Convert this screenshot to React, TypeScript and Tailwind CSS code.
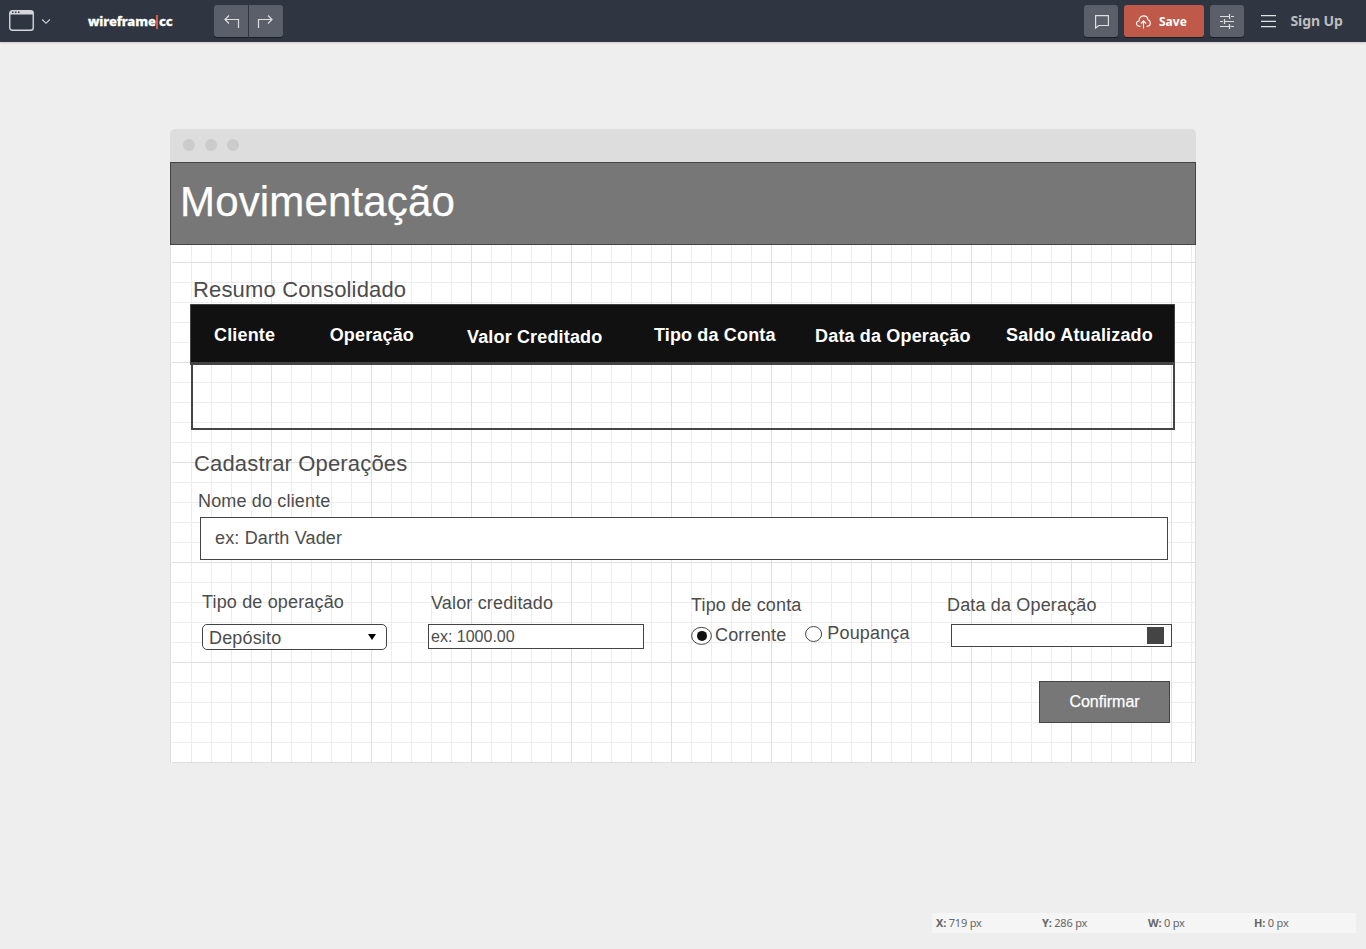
import React from "react";

const gridLines =
  "bg-[linear-gradient(to_right,#e0e0e0_1px,transparent_1px),linear-gradient(to_bottom,#e0e0e0_1px,transparent_1px),linear-gradient(to_right,#ededed_1px,transparent_1px),linear-gradient(to_bottom,#ededed_1px,transparent_1px)] bg-[size:100px_100px,100px_100px,20px_20px,20px_20px] bg-[position:0_17px,0_17px,0_17px,0_17px]";

const toolButton =
  "flex h-8 items-center justify-center bg-[#5b5f69] shadow-[0_1px_0_#1b1d24]";

const columns = [
  { label: "Cliente", place: "ml-[23px] mt-5" },
  { label: "Operação", place: "ml-[54.5px] mt-5" },
  { label: "Valor Creditado", place: "ml-[53px] mt-[22px]" },
  { label: "Tipo da Conta", place: "ml-[51.5px] mt-5" },
  { label: "Data da Operação", place: "ml-[39.4px] mt-[21px]" },
  { label: "Saldo Atualizado", place: "ml-[35.3px] mt-5" },
];

const readings = [
  { axis: "X:", value: "719 px" },
  { axis: "Y:", value: "286 px" },
  { axis: "W:", value: "0 px" },
  { axis: "H:", value: "0 px" },
];

function TopBar() {
  return (
    <header className="flex h-[42px] shrink-0 items-start bg-[#2f3541] font-['Noto_Sans',sans-serif] shadow-[0_1px_2px_rgba(0,0,0,0.15)]">
      <svg className="ml-[9px] mt-[10px]" width="25" height="21" viewBox="0 0 25 21" fill="none">
        <rect x="0.75" y="0.75" width="23.5" height="19.5" rx="2.5" stroke="#d5d6d9" strokeWidth="1.4" />
        <path d="M1 1h23v3.500H1z" fill="#d5d6d9" />
        <path d="M3 2.200h1.500M6 2.200h1.500M9 2.200h1.500" stroke="#2f3541" strokeWidth="1.4" />
      </svg>
      <svg className="ml-[7px] mt-[18px]" width="10" height="7" viewBox="0 0 10 7" fill="none">
        <path d="M1.200 1.500 5 5.300 8.800 1.500" stroke="#d5d6d9" strokeWidth="1.1" />
      </svg>
      <div className="ml-[37px] mt-3 flex w-[87px] text-[13px] leading-[18px] font-extrabold text-white tracking-[-0.1px] [-webkit-text-stroke:0.3px_white]">
        <span className="w-[68px]">wireframe</span>
        <span className="mt-[3px] h-[14px] w-[2px] bg-[#dc5743]" />
        <span className="ml-px">cc</span>
      </div>
      <div className="ml-[39px] mt-[5px] flex gap-px">
        <button className={`${toolButton} w-[34px] rounded-l-[3px]`}>
          <svg className="ml-[2px] mt-px" width="16" height="14" viewBox="0 0 16 14" fill="none" stroke="#dddee0" strokeWidth="1.2">
            <path d="M5 0.500 1 4.500 5 8.500M1 4.500H14.500V13" />
          </svg>
        </button>
        <button className={`${toolButton} w-[34px] rounded-r-[3px]`}>
          <svg className="mr-[2px] mt-px" width="16" height="14" viewBox="0 0 16 14" fill="none" stroke="#dddee0" strokeWidth="1.2">
            <path d="M11 0.500 15 4.500 11 8.500M15 4.500H1.500V13" />
          </svg>
        </button>
      </div>
      <div className="ml-auto mt-[5px] flex w-[282px] gap-1.5">
        <button className={`${toolButton} w-[34px] rounded-[3px]`}>
          <svg className="ml-px mt-px" width="14" height="14" viewBox="0 0 14 14" fill="none" stroke="#dddee0" strokeWidth="1.2">
            <path d="M.6.600h12.800v9.900H3.800L.6 13z" />
          </svg>
        </button>
        <button className="flex h-8 w-20 items-center rounded-[3px] bg-[#bf5a4a] pl-3 text-white shadow-[0_1px_0_#1b1d24]">
          <svg className="mt-px" width="15" height="14" viewBox="0 0 15 14" fill="none" stroke="#fff" strokeWidth="1.1">
            <path d="M4.700 11.200H3.200A2.600 2.600 0 0 1 3 6C2.900 2.900 5 .9 7.500.9c2.400 0 4.200 1.600 4.500 3.900 1.600.5 2.300 1.700 2.300 3.100 0 1.800-1.300 3.300-3 3.300h-.8M7.500 13.500V6M4.900 8.500l2.600-2.600 2.600 2.600" />
          </svg>
          <span className="ml-[8px] mt-[2px] text-[12px] font-bold">Save</span>
        </button>
        <button className={`${toolButton} w-[34px] rounded-[3px]`}>
          <svg width="14" height="16" viewBox="0 0 14 16" fill="none" stroke="#dddee0" strokeWidth="1.2">
            <path d="M0 3.500h9.500M11 3.500h3M9.500 1v5M0 8.500h3M4.500 8.500H14M4.500 6v5M0 13.500h9M10.500 13.500H14M9.500 11v5" />
          </svg>
        </button>
        <div className="flex items-center pl-[10.5px]">
          <svg width="15" height="13" viewBox="0 0 15 13" stroke="#e2e3e5" strokeWidth="1.3">
            <path d="M0 .7h15M0 6.300h15M0 11.700h15" />
          </svg>
          <span className="ml-[15px] text-[14px] leading-5 font-bold tracking-[-0.1px] text-[#bdbdbd]">Sign Up</span>
        </div>
      </div>
    </header>
  );
}

function SummaryTable() {
  return (
    <section className="ml-[19px] w-[985px]">
      <div className="flex h-[61px] items-start whitespace-nowrap border border-b-[3px] border-[#444] bg-[#111] text-[18px] leading-5 font-bold text-white">
        {columns.map((c) => (
          <span key={c.label} className={c.place}>
            {c.label}
          </span>
        ))}
      </div>
      <div className="ml-px h-[65px] border-2 border-t-0 border-[#444]" />
    </section>
  );
}

function OperationForm() {
  return (
    <section className="text-[18px] leading-5 whitespace-nowrap">
      <h2 className="ml-[23px] mt-[21px] text-[22px] leading-[25px]">Cadastrar Operações</h2>
      <label className="ml-[27px] mt-[15px] block">Nome do cliente</label>
      <div className="ml-[29px] mt-[6px] h-[43px] w-[968px] border border-[#444] bg-white pl-[14px] pt-[10px]">
        ex: Darth Vader
      </div>
      <div className="mt-8 flex h-[89px] items-start">
        <div className="ml-[31px] w-[185px]">
          <div>Tipo de operação</div>
          <div className="mt-3 flex h-[26px] items-start rounded-[5px] border border-[#444] bg-white pl-[6px] pt-[3px]">
            <span>Depósito</span>
            <svg className="ml-auto mr-[10px] mt-[6px]" width="8" height="6" viewBox="0 0 8 6">
              <path d="M0 0h8L4 6z" fill="#000" />
            </svg>
          </div>
        </div>
        <div className="ml-[41px] mt-px w-[216px]">
          <div className="ml-[3px]">Valor creditado</div>
          <div className="mt-[11px] h-[25px] border border-[#444] bg-white pl-[2px] pt-[3px] text-[16px] leading-[17px] tracking-normal">
            ex: 1000.00
          </div>
        </div>
        <div className="ml-[47px] mt-[3px] w-[220px]">
          <div>Tipo de conta</div>
          <div className="mt-[8px] flex items-start">
            <svg className="mt-[3px]" width="21" height="19" viewBox="0 0 21 19">
              <ellipse cx="10.500" cy="9.900" rx="9.900" ry="8.500" fill="#fff" stroke="#444" />
              <circle cx="11" cy="9.900" r="5" fill="#111" />
            </svg>
            <span className="ml-[3px] mt-[2px]">Corrente</span>
            <svg className="ml-[19px] mt-[2px]" width="18" height="17" viewBox="0 0 18 17">
              <ellipse cx="8.600" cy="9" rx="8" ry="7.500" fill="#fff" stroke="#444" />
            </svg>
            <span className="ml-[4px]">Poupança</span>
          </div>
        </div>
        <div className="ml-[36px] mt-[3px]">
          <div>Data da Operação</div>
          <div className="ml-[4px] mt-[9px] flex h-[23px] w-[221px] items-center justify-end border border-[#444] bg-white pr-[7px]">
            <div className="size-[17px] bg-[#444]" />
          </div>
        </div>
      </div>
      <button className="ml-[868px] block h-[42px] w-[131px] border border-[#444] bg-[#777] text-[16px] tracking-normal text-white [-webkit-text-stroke:0.25px_white]">
        Confirmar
      </button>
    </section>
  );
}

export default function App() {
  return (
    <div className="flex h-[949px] w-[1366px] flex-col overflow-hidden bg-[#eee]">
      <TopBar />
      <main className="ml-[170px] mt-[87px] w-[1026px] font-['Liberation_Sans',sans-serif] tracking-[0.01em] text-[#4c4c4c]">
        <div className="flex h-[33px] items-start gap-[10px] rounded-t-[5px] bg-[#ddd] pl-[13px] pt-[10px]">
          <span className="size-3 rounded-full bg-[#cbcbcb]" />
          <span className="size-3 rounded-full bg-[#cbcbcb]" />
          <span className="size-3 rounded-full bg-[#cbcbcb]" />
        </div>
        <h1 className="h-[83px] border border-[#444] bg-[#777] pl-[9px] pt-[15px] text-[42px] leading-[47px] text-white [-webkit-text-stroke:0.25px_white]">
          Movimentação
        </h1>
        <div className={`h-[518px] border-x border-[#ddd] bg-white shadow-[inset_1px_0_0_#fff] ${gridLines}`}>
          <h2 className="ml-[22px] pt-8 text-[22px] leading-[25px]">Resumo Consolidado</h2>
          <div className="h-[2px]" />
          <SummaryTable />
          <OperationForm />
        </div>
      </main>
      <footer className="mb-4 ml-[932px] mt-auto flex h-5 w-[424px] items-center bg-[#f5f5f5] font-['Noto_Sans',sans-serif] text-[11px] text-[#666]">
        {readings.map((r) => (
          <div key={r.axis} className="w-[106px] pl-1 tracking-[-0.2px]">
            <b>{r.axis}</b> {r.value}
          </div>
        ))}
      </footer>
    </div>
  );
}
